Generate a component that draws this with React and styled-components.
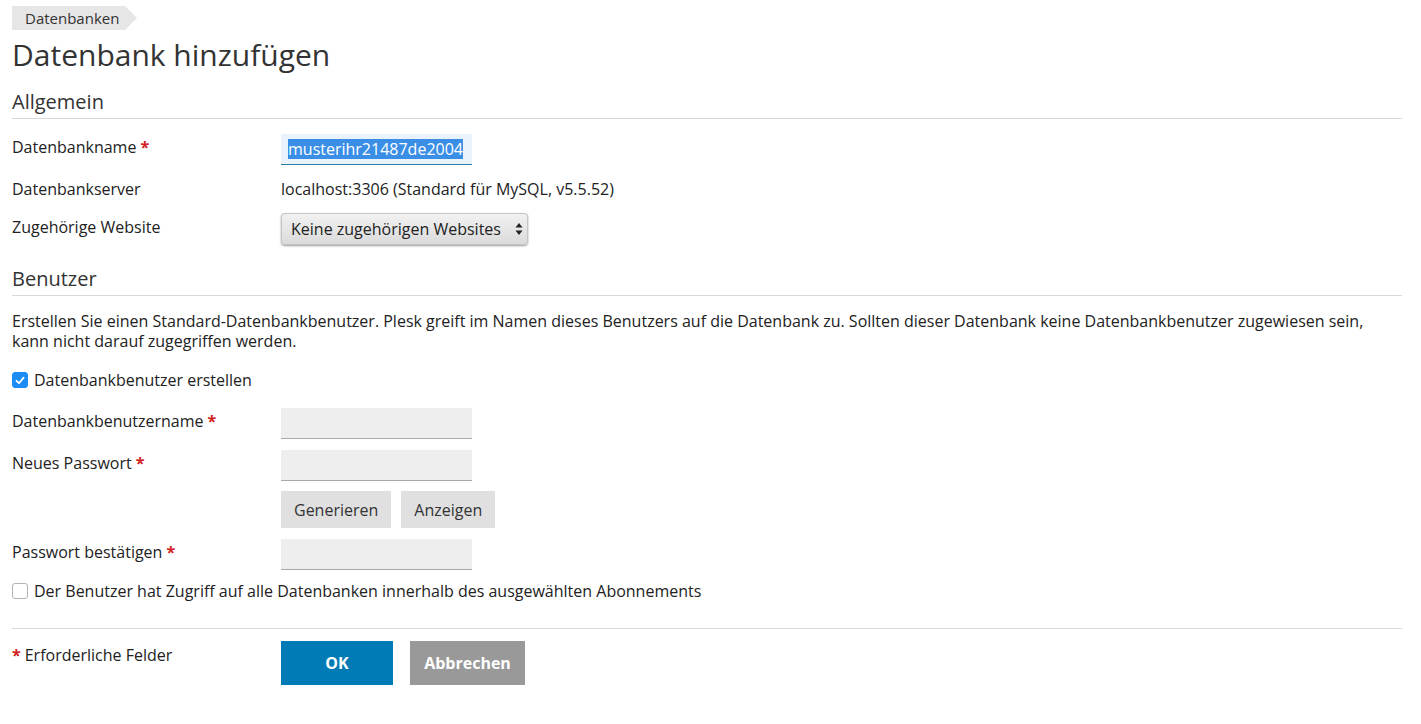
import React from 'react';
import styled, { createGlobalStyle } from 'styled-components';

const GlobalStyle = createGlobalStyle`
  body {
    margin: 0;
    background: #fff;
    font-family: "Open Sans", "Liberation Sans", sans-serif;
    color: #222;
  }
`;

const Page = styled.div`
  padding: 6px 19px 20px 12px;
`;

const Breadcrumb = styled.div`
  display: inline-flex;
  align-items: center;
  position: relative;
  height: 24px;
  padding: 0 6px 0 13px;
  margin-right: 12px;
  background: #e6e6e6;
  font-size: 15px;
  color: #333;

  &::after {
    content: '';
    position: absolute;
    right: -12px;
    top: 0;
    border-left: 12px solid #e6e6e6;
    border-top: 12px solid transparent;
    border-bottom: 12px solid transparent;
  }
`;

const Title = styled.h1`
  margin: 5px 0 0;
  font-size: 30px;
  font-weight: 400;
  line-height: 40px;
  color: #333;
`;

const Section = styled.h2`
  margin: ${p => p.mt || 0}px 0 0;
  padding: 14px 0 3px;
  font-size: 20px;
  font-weight: 400;
  line-height: 26px;
  color: #333;
  border-bottom: 1px solid #d9d9d9;
`;

const Row = styled.div`
  display: grid;
  grid-template-columns: 269px 1fr;
  align-items: start;
  min-height: ${p => p.h || 31}px;
  margin-top: ${p => p.mt || 0}px;
`;

const Label = styled.div`
  font-size: 16px;
  line-height: 20px;
  padding-top: ${p => p.pt ?? 3}px;
`;

const Req = styled.span`
  color: #d02020;
  font-weight: 700;
  margin-left: 4px;
`;

const Value = styled.div`
  font-size: 16px;
  line-height: 20px;
  padding-top: 1px;
`;

const NameInput = styled.div`
  display: inline-flex;
  align-items: center;
  width: 191px;
  height: 31px;
  box-sizing: border-box;
  padding: 0 7px;
  background: #eaf3fb;
  border-bottom: 1px solid #2c7fa3;
  font-size: 16px;
`;

const Selected = styled.span`
  background: #3a8ee6;
  color: #fff;
  line-height: 20px;
`;

const Select = styled.div`
  display: inline-flex;
  align-items: center;
  justify-content: space-between;
  gap: 10px;
  width: 247px;
  height: 32px;
  box-sizing: border-box;
  padding: 0 5px 0 10px;
  border-radius: 4px;
  background: linear-gradient(#f2f2f2, #dadada);
  box-shadow: 0 1px 2px rgba(0, 0, 0, 0.4), inset 0 0 0 1px #c6c6c6;
  font-size: 16px;
  color: #222;
`;

const Arrows = styled.svg`
  width: 8px;
  height: 14px;
`;

const Field = styled.div`
  width: 191px;
  height: 31px;
  background: #eeeeee;
  border-bottom: 1px solid #a8a8a8;
  box-sizing: border-box;
`;

const Text = styled.p`
  margin: 0;
  padding-top: 15px;
  font-size: 16px;
  line-height: 20px;
`;

const CheckRow = styled.label`
  display: flex;
  align-items: center;
  gap: 6px;
  font-size: 16px;
  line-height: 20px;
  margin-top: ${p => p.mt || 0}px;
`;

const Box = styled.span`
  width: 16px;
  height: 16px;
  box-sizing: border-box;
  border-radius: 3px;
  display: inline-flex;
  align-items: center;
  justify-content: center;
  background: ${p => (p.checked ? '#1e8cf5' : '#fff')};
  border: 1px solid ${p => (p.checked ? '#1e8cf5' : '#b3b3b3')};
`;

const BtnGroup = styled.div`
  display: flex;
  gap: ${p => p.gap || 10}px;
`;

const GrayButton = styled.button`
  height: 37px;
  padding: 0 13px;
  border: none;
  background: #e0e0e0;
  font-family: inherit;
  font-size: 16px;
  color: #333;
`;

const Footer = styled.div`
  margin-top: 27px;
  border-top: 1px solid #d9d9d9;
  padding-top: 12px;
  display: grid;
  grid-template-columns: 269px 1fr;
`;

const ActionButton = styled.button`
  height: 44px;
  width: ${p => p.w}px;
  border: none;
  background: ${p => p.bg};
  color: #fff;
  font-family: inherit;
  font-weight: 700;
  font-size: 16px;
`;

const Check = () => (
  <svg width="10" height="9" viewBox="0 0 10 9">
    <path d="M1.5 4.8 L4 7.2 L8.6 1.6" fill="none" stroke="#fff" strokeWidth="1.8" strokeLinecap="round" strokeLinejoin="round" />
  </svg>
);

export default function App() {
  return (
    <Page>
      <GlobalStyle />
      <Breadcrumb>Datenbanken</Breadcrumb>
      <Title>Datenbank hinzufügen</Title>

      <Section>Allgemein</Section>
      <Row h={31} mt={15}>
        <Label>Datenbankname<Req>*</Req></Label>
        <div><NameInput><Selected>musterihr21487de2004</Selected></NameInput></div>
      </Row>
      <Row h={21} mt={13}>
        <Label pt={1}>Datenbankserver</Label>
        <Value>localhost:3306 (Standard für MySQL, v5.5.52)</Value>
      </Row>
      <Row h={32} mt={14}>
        <Label pt={4}>Zugehörige Website</Label>
        <div>
          <Select>
            Keine zugehörigen Websites
            <Arrows viewBox="0 0 8 14">
              <path d="M4 1 L7.5 5.5 H0.5 Z M4 13 L7.5 8.5 H0.5 Z" fill="#222" />
            </Arrows>
          </Select>
        </div>
      </Row>

      <Section mt={7}>Benutzer</Section>
      <Text>
        Erstellen Sie einen Standard-Datenbankbenutzer. Plesk greift im Namen dieses Benutzers auf die Datenbank zu. Sollten dieser Datenbank keine Datenbankbenutzer zugewiesen sein, kann nicht darauf zugegriffen werden.
      </Text>
      <CheckRow mt={19}>
        <Box checked><Check /></Box>
        Datenbankbenutzer erstellen
      </CheckRow>
      <Row mt={18}>
        <Label>Datenbankbenutzername<Req>*</Req></Label>
        <Field />
      </Row>
      <Row mt={11}>
        <Label>Neues Passwort<Req>*</Req></Label>
        <Field />
      </Row>
      <Row mt={10} h={37}>
        <div />
        <BtnGroup gap={10}>
          <GrayButton>Generieren</GrayButton>
          <GrayButton>Anzeigen</GrayButton>
        </BtnGroup>
      </Row>
      <Row mt={11}>
        <Label>Passwort bestätigen<Req>*</Req></Label>
        <Field />
      </Row>
      <CheckRow mt={11}>
        <Box />
        Der Benutzer hat Zugriff auf alle Datenbanken innerhalb des ausgewählten Abonnements
      </CheckRow>

      <Footer>
        <Label pt={4}><Req style={{ marginLeft: 0, marginRight: 4 }}>*</Req>Erforderliche Felder</Label>
        <BtnGroup gap={17}>
          <ActionButton w={112} bg="#007bb5">OK</ActionButton>
          <ActionButton w={115} bg="#999999">Abbrechen</ActionButton>
        </BtnGroup>
      </Footer>
    </Page>
  );
}
